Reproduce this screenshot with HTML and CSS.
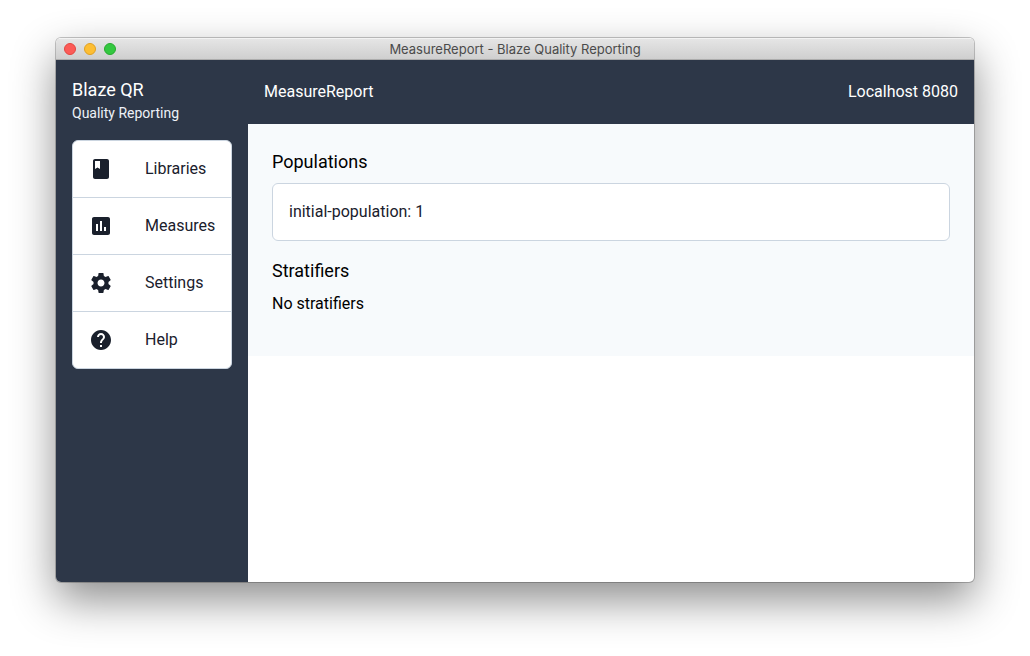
FILE: index.html
```html
<!DOCTYPE html>
<html lang="en">
<head>
<meta charset="utf-8">
<meta name="viewport" content="width=device-width, initial-scale=1">
<title>MeasureReport - Blaze Quality Reporting</title>
<link rel="stylesheet" href="styles.css">
</head>
<body>
<div class="window">
  <div class="titlebar">
    <div class="lights">
      <button class="light light-close" type="button" aria-label="Close"></button>
      <button class="light light-minimize" type="button" aria-label="Minimize"></button>
      <button class="light light-zoom" type="button" aria-label="Zoom"></button>
    </div>
    <div class="window-title">MeasureReport - Blaze Quality Reporting</div>
  </div>
  <div class="app">
    <aside class="sidebar">
      <div class="brand">
        <div class="brand-name">Blaze QR</div>
        <div class="brand-tagline">Quality Reporting</div>
      </div>
      <nav class="menu">
        <a class="menu-item" href="#libraries">
          <svg class="icon" viewBox="0 0 24 24" aria-hidden="true"><path d="M18 2H6c-1.1 0-2 .9-2 2v16c0 1.1.9 2 2 2h12c1.1 0 2-.9 2-2V4c0-1.1-.9-2-2-2zM6 4h5v8l-2.5-1.5L6 12V4z"/></svg>
          <span>Libraries</span>
        </a>
        <a class="menu-item" href="#measures">
          <svg class="icon" viewBox="0 0 24 24" aria-hidden="true"><path d="M19 3H5c-1.1 0-2 .9-2 2v14c0 1.1.9 2 2 2h14c1.1 0 2-.9 2-2V5c0-1.1-.9-2-2-2zM9 17H7v-7h2v7zm4 0h-2V7h2v10zm4 0h-2v-4h2v4z"/></svg>
          <span>Measures</span>
        </a>
        <a class="menu-item" href="#settings">
          <svg class="icon" viewBox="0 0 24 24" aria-hidden="true"><path d="M19.43 12.98c.04-.32.07-.64.07-.98s-.03-.66-.07-.98l2.11-1.65c.19-.15.24-.42.12-.64l-2-3.46c-.12-.22-.39-.3-.61-.22l-2.49 1c-.52-.4-1.08-.73-1.69-.98l-.38-2.65C14.46 2.18 14.25 2 14 2h-4c-.25 0-.46.18-.49.42l-.38 2.65c-.61.25-1.17.59-1.69.98l-2.49-1c-.23-.09-.49 0-.61.22l-2 3.46c-.13.22-.07.49.12.64l2.11 1.65c-.04.32-.07.65-.07.98s.03.66.07.98l-2.11 1.65c-.19.15-.24.42-.12.64l2 3.46c.12.22.39.3.61.22l2.49-1c.52.4 1.08.73 1.69.98l.38 2.65c.03.24.24.42.49.42h4c.25 0 .46-.18.49-.42l.38-2.65c.61-.25 1.17-.59 1.69-.98l2.49 1c.23.09.49 0 .61-.22l2-3.46c.12-.22.07-.49-.12-.64l-2.11-1.65zM12 15.5c-1.93 0-3.5-1.57-3.5-3.5s1.57-3.5 3.5-3.5 3.5 1.57 3.5 3.5-1.57 3.5-3.5 3.5z"/></svg>
          <span>Settings</span>
        </a>
        <a class="menu-item" href="#help">
          <svg class="icon" viewBox="0 0 24 24" aria-hidden="true"><path d="M12 2C6.48 2 2 6.48 2 12s4.48 10 10 10 10-4.48 10-10S17.52 2 12 2zm1 17h-2v-2h2v2zm2.07-7.75l-.9.92C13.45 12.9 13 13.5 13 15h-2v-.5c0-1.1.45-2.1 1.17-2.83l1.24-1.26c.37-.36.59-.86.59-1.41 0-1.1-.9-2-2-2s-2 .9-2 2H8c0-2.21 1.79-4 4-4s4 1.79 4 4c0 .88-.36 1.68-.93 2.25z"/></svg>
          <span>Help</span>
        </a>
      </nav>
    </aside>
    <div class="page">
      <header class="header">
        <div>MeasureReport</div>
        <div>Localhost 8080</div>
      </header>
      <main class="content">
        <section>
          <h2 class="heading">Populations</h2>
          <ul class="card-list">
            <li class="card">initial-population: 1</li>
          </ul>
        </section>
        <section>
          <h2 class="heading">Stratifiers</h2>
          <p class="note">No stratifiers</p>
        </section>
      </main>
    </div>
  </div>
</div>
</body>
</html>
```
FILE: styles.css
```css
* {
  box-sizing: border-box;
}

body {
  display: flex;
  min-height: 100vh;
  margin: 0;
  padding: 38px 56px 74px;
  background: #fff;
  color: #000;
  font: 16px/24px Roboto, sans-serif;
}

.window {
  display: flex;
  flex: 1;
  flex-direction: column;
  overflow: hidden;
  border-radius: 5px;
  background: #fff;
  box-shadow: 0 0 0 1px rgba(0, 0, 0, 0.22), 0 18px 44px rgba(0, 0, 0, 0.45);
}

.titlebar {
  display: grid;
  grid-template-columns: 1fr auto 1fr;
  align-items: center;
  height: 22px;
  border-top: 1px solid #f3f3f3;
  border-bottom: 1px solid #acacac;
  background: linear-gradient(#e5e5e5, #cfcfcf);
}

.lights {
  display: flex;
  gap: 8px;
  padding-left: 8px;
}

.light {
  width: 12px;
  height: 12px;
  padding: 0;
  border: 1px solid;
  border-radius: 50%;
}

.light-close {
  border-color: #e2463f;
  background: #fc5b57;
}

.light-minimize {
  border-color: #dfa023;
  background: #fdbe33;
}

.light-zoom {
  border-color: #27aa2e;
  background: #34c840;
}

.window-title {
  color: #4b4b4b;
  font: 13px/20px Inter, sans-serif;
}

.app {
  display: flex;
  flex: 1;
}

.sidebar {
  flex: none;
  width: 192px;
  padding: 16px;
  background: #2d3748;
}

.brand {
  margin-bottom: 16px;
  color: #fff;
}

.brand-name {
  font-size: 18px;
  line-height: 27px;
}

.brand-tagline {
  color: #edf2f7;
  font-size: 14px;
  line-height: 21px;
}

.menu {
  overflow: hidden;
  border: 1px solid #cbd5e0;
  border-radius: 6px;
  background: #fff;
}

.menu-item {
  display: flex;
  gap: 32px;
  padding: 16px;
  color: #1a202c;
  text-decoration: none;
}

.menu-item + .menu-item {
  border-top: 1px solid #cbd5e0;
}

.icon {
  flex: none;
  width: 24px;
  height: 24px;
  fill: currentColor;
}

.page {
  flex: 1;
}

.header {
  display: flex;
  align-items: center;
  justify-content: space-between;
  height: 64px;
  padding: 0 16px;
  background: #2d3748;
  color: #fff;
}

.content {
  display: flex;
  flex-direction: column;
  gap: 16px;
  padding: 24px 24px 40px;
  background: #f7fafc;
}

.heading {
  margin: 0 0 8px;
  font-size: 18px;
  font-weight: 400;
  line-height: 27px;
}

.card-list {
  margin: 0;
  padding: 0;
  border: 1px solid #cbd5e0;
  border-radius: 6px;
  background: #fff;
  list-style: none;
}

.card {
  padding: 16px;
  color: #1a202c;
}

.note {
  margin: 0;
}
```
